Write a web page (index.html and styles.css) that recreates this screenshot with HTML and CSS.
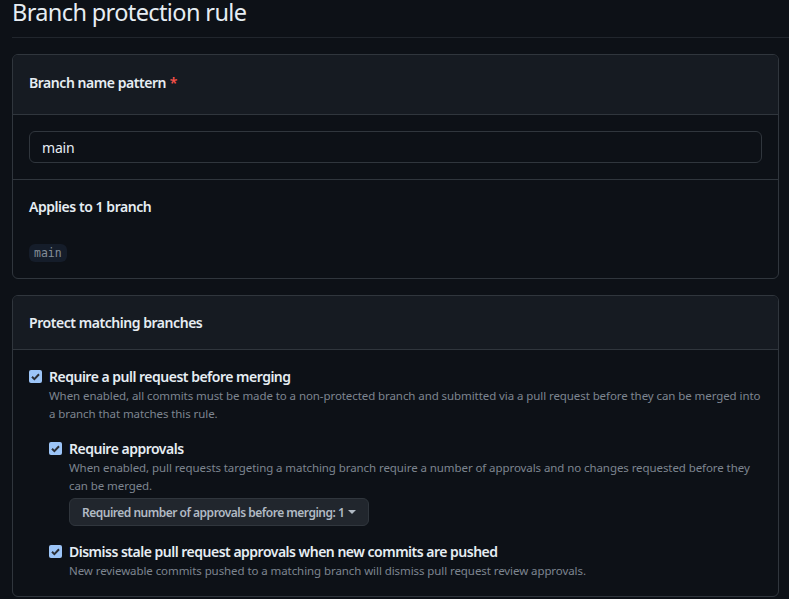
FILE: index.html
```html
<!DOCTYPE html>
<html lang="en">
<head>
<meta charset="utf-8">
<title>Branch protection rule</title>
<link rel="stylesheet" href="styles.css">
</head>
<body>
<div class="page">
  <div class="subhead">
    <h2 class="subhead-heading">Branch protection rule</h2>
  </div>

  <div class="box">
    <div class="box-header box-header-tall">
      <span class="label">Branch name pattern</span> <span class="req">*</span>
    </div>
    <div class="box-row">
      <input class="input" type="text" value="main">
    </div>
    <div class="box-row box-row-last">
      <div class="label">Applies to 1 branch</div>
      <div class="chips"><code class="chip">main</code></div>
    </div>
  </div>

  <div class="box">
    <div class="box-header">
      <span class="label">Protect matching branches</span>
    </div>
    <div class="box-body">
      <div class="check">
        <span class="cb"><svg viewBox="0 0 13 13" width="13" height="13"><path d="M3 6.7 L5.4 9.1 L10 4.3" fill="none" stroke="#2b2f36" stroke-width="2"/></svg></span>
        <div class="check-text">
          <div class="check-label">Require a pull request before merging</div>
          <p class="note">When enabled, all commits must be made to a non-protected branch and submitted via a pull request before they can be merged into a branch that matches this rule.</p>

          <div class="check nested">
            <span class="cb"><svg viewBox="0 0 13 13" width="13" height="13"><path d="M3 6.7 L5.4 9.1 L10 4.3" fill="none" stroke="#2b2f36" stroke-width="2"/></svg></span>
            <div class="check-text">
              <div class="check-label">Require approvals</div>
              <p class="note">When enabled, pull requests targeting a matching branch require a number of approvals and no changes requested before they can be merged.</p>
              <button class="btn" type="button">Required number of approvals before merging: 1 <span class="caret"></span></button>
            </div>
          </div>

          <div class="check nested">
            <span class="cb"><svg viewBox="0 0 13 13" width="13" height="13"><path d="M3 6.7 L5.4 9.1 L10 4.3" fill="none" stroke="#2b2f36" stroke-width="2"/></svg></span>
            <div class="check-text">
              <div class="check-label">Dismiss stale pull request approvals when new commits are pushed</div>
              <p class="note">New reviewable commits pushed to a matching branch will dismiss pull request review approvals.</p>
            </div>
          </div>
        </div>
      </div>
    </div>
  </div>
</div>
</body>
</html>
```

FILE: styles.css
```css
html, body {
  margin: 0;
  padding: 0;
  background: #0d1117;
  color: #e6edf3;
  font-family: "Noto Sans", "Open Sans", sans-serif;
  font-size: 14px;
  line-height: 1.5;
  overflow: hidden;
}

.page {
  padding-left: 12px;
}

.subhead {
  border-bottom: 1px solid #21262d;
  padding-bottom: 11px;
  margin-bottom: 16px;
}

.subhead-heading {
  margin: -2px 0 0;
  font-size: 23.5px;
  font-weight: 400;
  line-height: 28px;
  letter-spacing: -0.62px;
}

.box {
  margin-right: 10px;
  border: 1px solid #30363d;
  border-radius: 6px;
  margin-bottom: 16px;
  overflow: hidden;
}

.box-header {
  background: #161b22;
  padding: 16px;
  border-bottom: 1px solid #30363d;
  line-height: 21px;
}

.box-header-tall {
  padding-top: 17px;
  padding-bottom: 21px;
}

.label {
  font-weight: 600;
  font-size: 14px;
  line-height: 21px;
  letter-spacing: -0.45px;
}

.req {
  color: #f85149;
  font-weight: 600;
}

.box-row {
  padding: 16px;
  border-bottom: 1px solid #30363d;
}

.box-row-last {
  border-bottom: 0;
}

.input {
  display: block;
  box-sizing: border-box;
  width: 100%;
  height: 32px;
  padding: 0 12px;
  background: #0d1117;
  border: 1px solid #30363d;
  border-radius: 6px;
  color: #e6edf3;
  font-family: inherit;
  font-size: 14px;
  letter-spacing: -0.2px;
  outline: none;
}

.chips {
  margin-top: 27px;
  display: flex;
}

.chip {
  display: inline-block;
  height: 18px;
  line-height: 18px;
  padding: 0 5px;
  border-radius: 6px;
  background: #151d2a;
  color: #848d97;
  font-family: "DejaVu Sans Mono", "Liberation Mono", monospace;
  font-size: 11.5px;
}

.box-body {
  padding: 16px;
}

.check {
  display: flex;
  gap: 7px;
}

.check.nested {
  margin-top: 15px;
}

.cb {
  flex: none;
  width: 13px;
  height: 13px;
  margin-top: 4px;
  background: #9cc5f8;
  border-radius: 2px;
  display: flex;
}

.check-text {
  flex: 1;
  min-width: 0;
}

.check-label {
  font-weight: 600;
  font-size: 14px;
  line-height: 21px;
  letter-spacing: -0.5px;
}

.note {
  margin: 0;
  font-size: 11.5px;
  line-height: 18px;
  color: #7d8590;
  letter-spacing: -0.08px;
}

.btn {
  margin-top: 3px;
  display: inline-flex;
  align-items: center;
  gap: 4px;
  height: 28px;
  padding: 0 12px;
  background: #21262d;
  border: 1px solid #30363d;
  border-radius: 6px;
  color: #b1bac4;
  font-family: inherit;
  font-size: 12px;
  font-weight: 600;
  letter-spacing: -0.5px;
}

.caret {
  width: 0;
  height: 0;
  border-left: 4px solid transparent;
  border-right: 4px solid transparent;
  border-top: 4px solid #b1bac4;
}
```
